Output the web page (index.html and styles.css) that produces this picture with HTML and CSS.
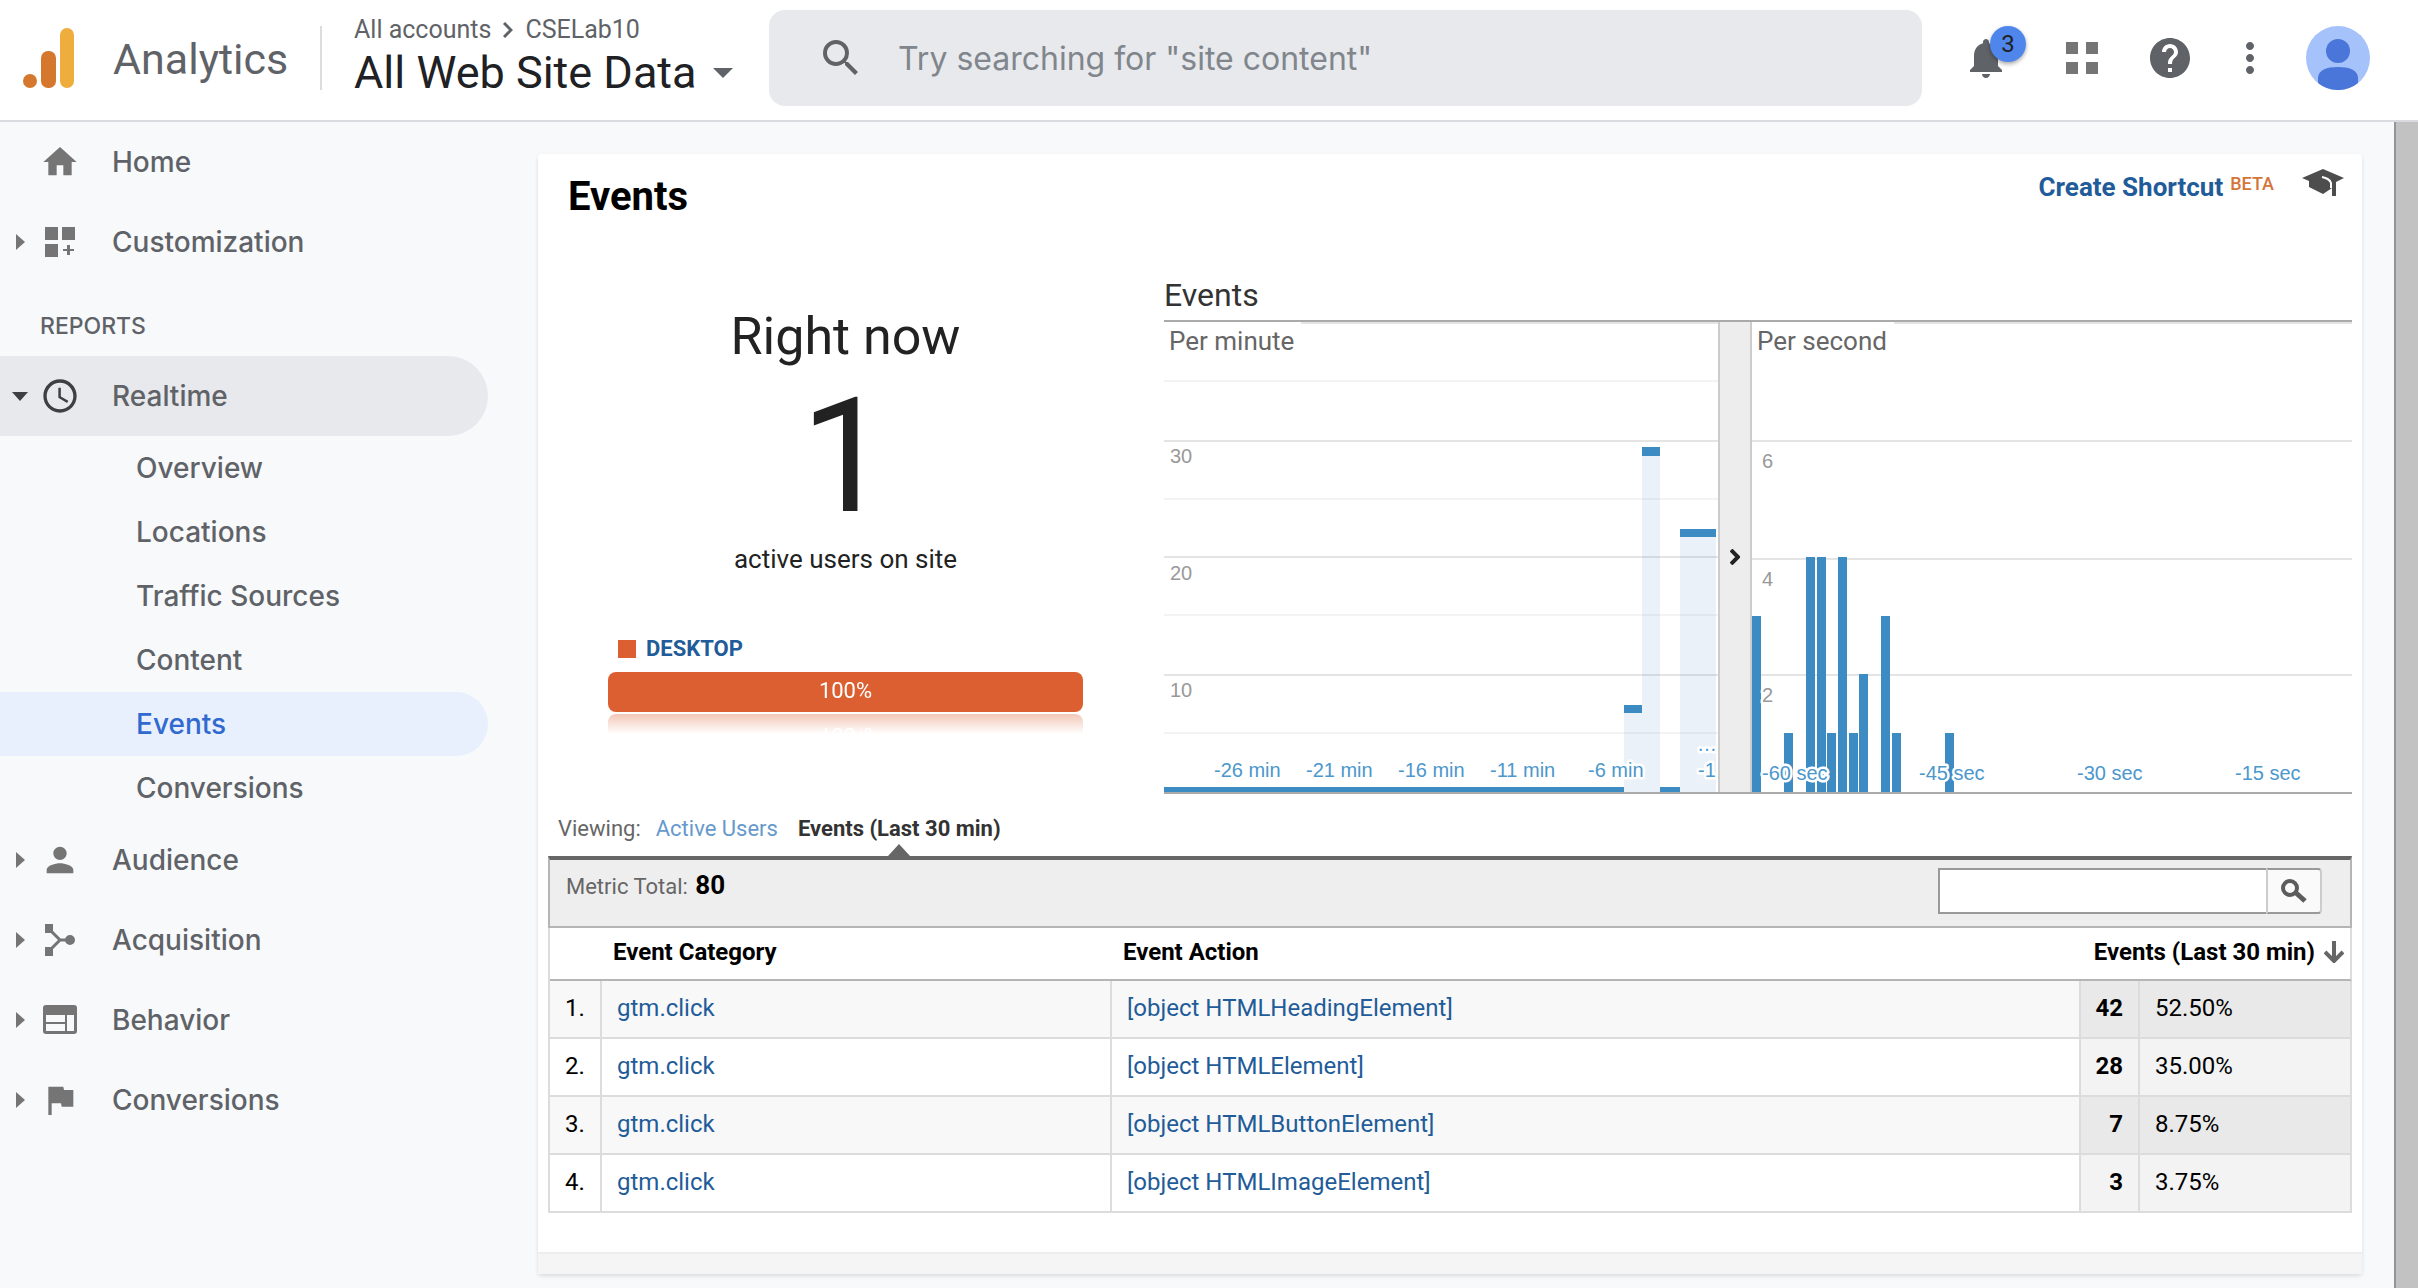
FILE: index.html
```html
<!DOCTYPE html>
<html lang="en">
<head>
<meta charset="utf-8">
<title>Analytics</title>
<link rel="stylesheet" href="styles.css">
</head>
<body>
<header class="topbar">
  <a class="brand" href="#">
    <svg class="brand-logo" viewBox="0 0 52 60" aria-hidden="true">
      <rect x="37" y="0" width="14" height="60" rx="7" fill="#efad3e"/>
      <rect x="18" y="23" width="15" height="37" rx="7" fill="#d5782d"/>
      <circle cx="7" cy="53" r="7" fill="#d5782d"/>
    </svg>
    <span class="brand-name">Analytics</span>
  </a>
  <div class="account">
    <div class="crumbs">
      <a href="#">All accounts</a>
      <svg class="crumb-arrow" viewBox="0 0 10 16" aria-hidden="true"><path d="M1 1l7 7-7 7" fill="none" stroke="#5f6368" stroke-width="3"/></svg>
      <a href="#">CSELab10</a>
    </div>
    <button class="view-picker" type="button">All Web Site Data<span class="caret"></span></button>
  </div>
  <form class="search">
    <svg class="search-icon" viewBox="3 3 18 18" aria-hidden="true"><path fill="#5f6368" d="M15.5 14h-.79l-.28-.27A6.471 6.471 0 0 0 16 9.5 6.5 6.5 0 1 0 9.5 16c1.61 0 3.09-.59 4.23-1.57l.27.28v.79l5 4.99L20.49 19l-4.99-5zm-6 0C7.01 14 5 11.99 5 9.5S7.01 5 9.5 5 14 7.01 14 9.5 11.99 14 9.5 14z"/></svg>
    <input class="search-input" type="text" aria-label="Search" placeholder="Try searching for &quot;site content&quot;">
  </form>
  <div class="tools">
    <button class="tool" type="button" aria-label="Notifications">
      <svg viewBox="0 0 24 24"><path d="M12 22c1.1 0 2-.9 2-2h-4c0 1.1.89 2 2 2zm6-6v-5c0-3.07-1.64-5.64-4.5-6.32V4c0-.83-.67-1.5-1.5-1.5s-1.5.67-1.5 1.5v.68C7.63 5.36 6 7.92 6 11v5l-2 2v1h16v-1l-2-2z"/></svg>
      <span class="badge">3</span>
    </button>
    <button class="tool apps" type="button" aria-label="Apps">
      <svg viewBox="0 0 48 48"><path fill="#757575" d="M8 8h12v12H8zM28 8h12v12H28zM8 28h12v12H8zM28 28h12v12H28z"/></svg>
    </button>
    <button class="tool help" type="button" aria-label="Help">
      <svg viewBox="0 0 24 24"><path d="M12 2C6.48 2 2 6.48 2 12s4.48 10 10 10 10-4.48 10-10S17.52 2 12 2zm1 17h-2v-2h2v2zm2.07-7.75l-.9.92C13.45 12.9 13 13.5 13 15h-2v-.5c0-1.1.45-2.1 1.17-2.83l1.24-1.26c.37-.36.59-.86.59-1.41 0-1.1-.9-2-2-2s-2 .9-2 2H8c0-2.21 1.79-4 4-4s4 1.79 4 4c0 .88-.36 1.68-.93 2.25z"/></svg>
    </button>
    <button class="tool more" type="button" aria-label="More">
      <svg viewBox="0 0 24 24"><path d="M12 8c1.1 0 2-.9 2-2s-.9-2-2-2-2 .9-2 2 .9 2 2 2zm0 2c-1.1 0-2 .9-2 2s.9 2 2 2 2-.9 2-2-.9-2-2-2zm0 6c-1.1 0-2 .9-2 2s.9 2 2 2 2-.9 2-2-.9-2-2-2z"/></svg>
    </button>
    <button class="avatar" type="button" aria-label="Account">
      <svg viewBox="0 0 64 64"><circle cx="32" cy="32" r="32" fill="#a5c2fa"/><circle cx="32" cy="25" r="12" fill="#4a75d9"/><path fill="#4a75d9" d="M12 57V52C12 44 21 41 32 41s20 3 20 11v5a32 32 0 0 1-40 0z"/></svg>
    </button>
  </div>
</header>
<div class="page">
  <nav class="sidebar" aria-label="Reports">
    <a class="item" href="#"><span class="twist"></span><svg class="item-icon" viewBox="0 0 24 24"><path d="M10 20v-6h4v6h5v-8h3L12 3 2 12h3v8z"/></svg>Home</a>
    <a class="item" href="#"><span class="twist closed"></span><svg class="item-icon" viewBox="-2 -2 40 40"><path d="M3 3h13v13H3zM20 3h13v13H20zM3 20h13v13H3zM25 21h3v4h4v2h-4v4h-3v-4h-4v-2h4z"/></svg>Customization</a>
    <h2 class="group">REPORTS</h2>
    <a class="item open" href="#"><span class="twist opened"></span><svg class="item-icon dark" viewBox="0 0 24 24"><path d="M11.99 2C6.47 2 2 6.48 2 12s4.47 10 9.99 10C17.52 22 22 17.52 22 12S17.52 2 11.99 2zM12 20c-4.42 0-8-3.58-8-8s3.58-8 8-8 8 3.58 8 8-3.58 8-8 8zm.5-13H11v6l5.25 3.15.75-1.23-4.500-2.670z"/></svg>Realtime</a>
    <a class="sub" href="#">Overview</a>
    <a class="sub" href="#">Locations</a>
    <a class="sub" href="#">Traffic Sources</a>
    <a class="sub" href="#">Content</a>
    <a class="sub current" href="#" aria-current="page">Events</a>
    <a class="sub" href="#">Conversions</a>
    <a class="item" href="#"><span class="twist closed"></span><svg class="item-icon" viewBox="0 0 24 24"><path d="M12 12c2.210 0 4-1.790 4-4s-1.790-4-4-4-4 1.790-4 4 1.790 4 4 4zm0 2c-2.670 0-8 1.340-8 4v2h16v-2c0-2.660-5.330-4-8-4z"/></svg>Audience</a>
    <a class="item" href="#"><span class="twist closed"></span><svg class="item-icon" viewBox="-2 -2 40 40"><path d="M3 2h8v9H3zM3 25h8v9H3zM28 13a5 5 0 1 1 0 10a5 5 0 0 1 0-10z"/><path d="M9 9l9 9-9 9M17 18h10" fill="none" stroke="#757575" stroke-width="3"/></svg>Acquisition</a>
    <a class="item" href="#"><span class="twist closed"></span><svg class="item-icon" viewBox="-2 -2 40 40"><path fill-rule="evenodd" d="M4 3h28a3 3 0 0 1 3 3v23a3 3 0 0 1-3 3H4a3 3 0 0 1-3-3V6a3 3 0 0 1 3-3zM4 13v7h19v-7zM4 22v7h19v-7zM25 13v16h7V13z"/></svg>Behavior</a>
    <a class="item" href="#"><span class="twist closed"></span><svg class="item-icon" viewBox="0 0 24 24"><path d="M14.400 6L14 4H5v17h2v-7h5.600l.4 2h7V6z"/></svg>Conversions</a>
  </nav>
  <main class="content">
    <section class="card">
      <div class="card-head">
        <h1 class="title">Events</h1>
        <div class="actions">
          <a class="shortcut" href="#">Create Shortcut</a><sup class="beta">BETA</sup>
          <svg class="hat" viewBox="0 0 42 28" aria-label="Education"><path fill="#4d4d4d" d="M0 9L21 0l21 9-8 4v14h-4v-8l-9 6-14-7v-6z"/><path d="M20 8c4 1 8 2 9 6v5" fill="none" stroke="#fff" stroke-width="2"/></svg>
        </div>
      </div>
      <div class="overview">
        <div class="now">
          <h2 class="now-title">Right now</h2>
          <div class="now-count">1</div>
          <div class="now-label">active users on site</div>
          <div class="legend"><span class="swatch"></span><a href="#">DESKTOP</a></div>
          <div class="device-bar">100%</div>
        </div>
        <div class="charts">
          <h2 class="charts-title">Events</h2>
          <div class="plots">
            <figure class="plot plot-minute">
              <svg viewBox="0 0 554 470" role="img" aria-label="Events per minute">
                <path class="grid" d="M137 1H554M0 119H554M0 235H554M0 353H554"/>
                <path class="grid minor" d="M0 59H554M0 177H554M0 293H554M0 411H554"/>
                <path class="area" d="M460 383h18v87h-18zM478 126h18v344h-18zM516 207h36v263h-36z"/>
                <path class="bar" d="M0 465h460v5H0zM496 465h20v5h-20zM460 383h18v8h-18zM478 125h18v9h-18zM516 207h36v8h-36z"/>
                <g class="ylab"><text x="6" y="141">30</text><text x="6" y="258">20</text><text x="6" y="375">10</text></g>
                <g class="xlab"><text x="50" y="455">-26 min</text><text x="142" y="455">-21 min</text><text x="234" y="455">-16 min</text><text x="326" y="455">-11 min</text><text x="424" y="455">-6 min</text><text x="534" y="455">-1</text><text x="533" y="429">…</text></g>
                <text class="name" x="5" y="28">Per minute</text>
              </svg>
            </figure>
            <button class="collapse" type="button" aria-label="Collapse per minute chart">
              <svg viewBox="0 0 10 16"><path d="M1 1l7 7-7 7" fill="none" stroke="#222" stroke-width="4"/></svg>
            </button>
            <figure class="plot plot-second">
              <svg viewBox="0 0 600 470" role="img" aria-label="Events per second">
                <path class="grid" d="M142 1H600M0 119H600M0 237H600M0 353H600"/>
                <path class="bar" d="M0 294h9v176H0zM32 411h9v59h-9zM54 235h9v235h-9zM65 235h9v235h-9zM75 411h9v59h-9zM86 235h9v235h-9zM97 411h9v59h-9zM107 352h9v118h-9zM129 294h9v176h-9zM140 411h9v59h-9zM193 411h9v59h-9z"/>
                <g class="ylab"><text x="10" y="146">6</text><text x="10" y="264">4</text><text x="10" y="380">2</text></g>
                <g class="xlab"><text x="10" y="458">-60 sec</text><text x="167" y="458">-45 sec</text><text x="325" y="458">-30 sec</text><text x="483" y="458">-15 sec</text></g>
                <text class="name" x="5" y="28">Per second</text>
              </svg>
            </figure>
          </div>
        </div>
      </div>
      <div class="tabs">
        <span>Viewing:</span>
        <a class="tab" href="#">Active Users</a>
        <a class="tab selected" href="#">Events (Last 30 min)</a>
      </div>
      <div class="summary">
        <div class="total">Metric Total: <strong>80</strong></div>
        <form class="filter">
          <input class="filter-input" type="text" aria-label="Filter events">
          <button class="filter-go" type="button" aria-label="Filter">
            <svg viewBox="0 0 26 24"><circle cx="9" cy="9" r="7" fill="none" stroke="#5c5c5c" stroke-width="4"/><path d="M14 13l10 9" stroke="#5c5c5c" stroke-width="5"/></svg>
          </button>
        </form>
      </div>
      <table class="events">
        <colgroup><col class="c-index"><col class="c-category"><col><col class="c-count"><col class="c-share"></colgroup>
        <thead>
          <tr><th></th><th scope="col">Event Category</th><th scope="col">Event Action</th><th class="sorted" scope="col" colspan="2"><span class="sort">Events (Last 30 min)<svg viewBox="0 0 20 22"><path d="M10 0v19M1 11l9 9 9-9" fill="none" stroke="#666" stroke-width="4"/></svg></span></th></tr>
        </thead>
        <tbody>
          <tr><td>1.</td><td><a href="#">gtm.click</a></td><td><a href="#">[object HTMLHeadingElement]</a></td><td>42</td><td>52.50%</td></tr>
          <tr><td>2.</td><td><a href="#">gtm.click</a></td><td><a href="#">[object HTMLElement]</a></td><td>28</td><td>35.00%</td></tr>
          <tr><td>3.</td><td><a href="#">gtm.click</a></td><td><a href="#">[object HTMLButtonElement]</a></td><td>7</td><td>8.75%</td></tr>
          <tr><td>4.</td><td><a href="#">gtm.click</a></td><td><a href="#">[object HTMLImageElement]</a></td><td>3</td><td>3.75%</td></tr>
        </tbody>
      </table>
      <div class="card-foot"></div>
    </section>
  </main>
  <div class="scroll-track" aria-hidden="true"></div>
</div>
</body>
</html>
```
FILE: styles.css
```css
* { box-sizing: border-box; }
body { margin: 0; background: #f8f9fb; color: #000; font-family: Roboto, "Liberation Sans", sans-serif; font-size: 24px; }
a { color: inherit; text-decoration: none; }
button { border: 0; padding: 0; background: none; font: inherit; color: inherit; cursor: pointer; }
h1, h2, figure { margin: 0; font-weight: 400; }
svg { display: block; }

/* Top bar */
.topbar { display: flex; align-items: center; height: 122px; padding: 0 48px 4px 23px; background: #fff; border-bottom: 2px solid #dadbe0; }
.brand { display: flex; align-items: center; gap: 38px; width: 299px; height: 64px; border-right: 2px solid #dadce0; color: #5f6368; }
.brand-logo { width: 52px; height: 60px; }
.brand-name { font-size: 43px; line-height: 52px; padding-top: 2px; }
.account { width: 415px; margin-left: 32px; padding-top: 2px; }
.crumbs { display: flex; align-items: center; gap: 12px; color: #5f6368; font-size: 25px; line-height: 28px; }
.crumb-arrow { width: 10px; height: 16px; }
.view-picker { display: flex; align-items: center; gap: 16px; color: #202124; font-size: 45px; line-height: 58px; white-space: nowrap; }
.caret { border: 10px solid transparent; border-top-color: #5f6368; border-bottom: 0; }
.search { display: flex; align-items: center; flex: 1; height: 96px; padding-left: 54px; gap: 39px; border-radius: 16px; background: #e8e9ed; }
.search-icon { width: 36px; height: 36px; }
.search-input { flex: 1; min-width: 0; border: 0; padding: 0; background: none; outline: 0; font: 32px Inter, Roboto, sans-serif; color: #5f6368; }
.search-input::placeholder { color: #80868b; opacity: 1; }
.tools { display: flex; align-items: center; margin-left: 40px; }
.tool { position: relative; width: 48px; height: 48px; margin-right: 48px; }
.apps { margin-right: 40px; }
.help, .more { margin-right: 32px; }
.tool svg { width: 48px; height: 48px; fill: #5f6368; }
.badge { position: absolute; left: 28px; top: -8px; width: 36px; height: 36px; border-radius: 18px; background: #4f86ec; color: #202124; font-size: 24px; line-height: 36px; text-align: center; box-shadow: 0 2px 4px rgba(0, 0, 0, .35); }
.avatar { width: 64px; height: 64px; }

/* Page frame */
.page { display: flex; align-items: stretch; min-height: calc(100vh - 122px); }
.content { flex: 1; min-width: 0; padding: 32px 32px 14px 0; }
.scroll-track { width: 24px; border-left: 2px solid #949598; background: #c2c2c2; }

/* Side navigation */
.sidebar { width: 538px; flex: none; padding-right: 50px; font-family: Inter, Roboto, sans-serif; font-size: 28px; font-weight: 500; color: #5f6368; }
.item { display: flex; align-items: center; height: 80px; }
.item-icon { width: 40px; height: 40px; margin-right: 32px; fill: #757575; }
.item-icon.dark { fill: #3c4043; }
.twist { width: 40px; display: flex; padding-left: 16px; }
.closed::before { content: ""; border: 8px solid transparent; border-left: 9px solid #757575; border-right: 0; }
.opened { padding-left: 12px; }
.opened::before { content: ""; border: 8px solid transparent; border-top: 9px solid #3c4043; border-bottom: 0; }
.open { background: #e8e9ed; border-radius: 0 40px 40px 0; }
.group { height: 74px; padding: 7px 0 0 40px; font-size: 23px; line-height: 74px; font-weight: 500; }
.sub { display: flex; align-items: center; height: 64px; padding-left: 136px; }
.current { background: #e8effd; color: #3069d0; border-radius: 0 32px 32px 0; }

/* Report card */
.card { padding: 0 10px; border-radius: 4px; background: #fff; box-shadow: 0 2px 4px rgba(0, 0, 0, .12); }
.card-head { display: flex; justify-content: space-between; height: 84px; padding: 18px 8px 0 20px; }
.title { padding-top: 1px; font-size: 40px; line-height: 48px; font-weight: 700; }
.actions { display: flex; align-items: flex-start; }
.shortcut { color: #1f5c99; font-size: 26px; line-height: 30px; font-weight: 700; }
.beta { margin-left: 7px; color: #d4753a; font-size: 18px; line-height: 24px; font-weight: 500; }
.hat { width: 42px; height: 28px; margin-left: 28px; margin-top: -3px; }
.overview { display: grid; grid-template-columns: 1fr 2fr; column-gap: 22px; }

.now { padding: 69px 59px 0 60px; color: #222; text-align: center; }
.now-title { font-size: 52px; line-height: 60px; }
.now-count { margin-top: 10px; font-size: 160px; line-height: 160px; }
.now-label { margin-top: 6px; font-size: 26px; line-height: 32px; }
.legend { display: flex; align-items: center; gap: 10px; margin-top: 61px; padding-left: 10px; font-size: 22px; line-height: 26px; font-weight: 700; color: #1f5c99; }
.swatch { width: 18px; height: 18px; background: #dc5f31; }
.device-bar { height: 40px; margin-top: 10px; border-radius: 8px; background: #dc5f31; color: #fff; font-size: 22px; line-height: 38px; -webkit-box-reflect: below 2px linear-gradient(transparent 50%, rgba(0, 0, 0, .35)); }

.charts { padding-top: 37px; }
.charts-title { padding-bottom: 5px; border-bottom: 2px solid #aaa; color: #333; font-size: 32px; line-height: 40px; }
.plots { display: grid; grid-template-columns: 554fr 34px 600fr; border-bottom: 2px solid #aaa; }
.plot svg { width: 100%; height: auto; }
.grid { stroke: #e4e4e4; stroke-width: 2; fill: none; }
.minor { stroke: #f3f3f3; }
.area { fill: rgba(60, 130, 200, .11); }
.bar { fill: #3c8bc3; }
.ylab, .xlab { font-family: "Liberation Sans", sans-serif; font-size: 20px; stroke: #fff; stroke-width: 5px; stroke-linejoin: round; paint-order: stroke; }
.ylab { fill: #999; }
.xlab { fill: #4c97cb; }
.name { fill: #666; font-size: 26px; }
.collapse { display: flex; align-items: center; justify-content: center; border: solid #ccc; border-width: 0 2px; background: #ededed; }
.collapse svg { width: 10px; height: 16px; }

/* Tabs and table */
.tabs { display: flex; height: 62px; padding: 22px 10px 0; color: #666; font-size: 22px; line-height: 26px; }
.tab { position: relative; margin-left: 15px; color: #6699cc; }
.selected { margin-left: 20px; color: #333; font-weight: 700; }
.selected::after { content: ""; position: absolute; left: 50%; bottom: 0; margin-left: -11px; border: 11px solid transparent; border-top: 0; border-bottom: 12px solid #666; }
.summary { display: flex; justify-content: space-between; height: 72px; padding: 8px 28px 0 16px; background: #eee; border: 2px solid #b5b5b5; border-top: 4px solid #666; }
.total { padding-top: 2px; color: #666; font-size: 22px; line-height: 30px; }
.total strong { margin-left: 2px; color: #000; font-size: 26px; }
.filter { display: flex; height: 46px; }
.filter-input { width: 328px; border: 2px solid #999; border-right: 0; background: #fff; outline: 0; }
.filter-go { display: flex; align-items: center; justify-content: center; width: 56px; border: 2px solid #999; border-left-color: #ccc; border-right-color: #ccc; border-radius: 0 4px 4px 0; background: #fafafa; }
.filter-go svg { width: 26px; height: 24px; }
.events { width: 100%; table-layout: fixed; border-collapse: separate; border-spacing: 0; border-left: 2px solid #dcdcdc; font-size: 24px; line-height: 28px; }
.c-index { width: 52px; }
.c-category { width: 510px; }
.c-count { width: 59px; }
.c-share { width: 212px; }
.events th { padding: 10px 0 13px 11px; border-bottom: 2px solid #b5b5b5; text-align: left; font-weight: 700; }
.events .sorted { border-right: 2px solid #dcdcdc; padding-right: 6px; }
.sort { display: flex; align-items: center; justify-content: flex-end; gap: 9px; white-space: nowrap; }
.sort svg { width: 20px; height: 22px; }
.events td { padding: 13px 0 15px 15px; border: solid #dcdcdc; border-width: 0 2px 2px 0; }
.events td a { color: #1f5c99; }
.events td:nth-child(4) { padding: 13px 15px 15px 0; text-align: right; font-weight: 700; background: #f3f3f3; }
.events td:nth-child(5) { padding-left: 15px; background: #f3f3f3; }
.events tbody tr:nth-child(odd) td { background: #f8f8f8; }
.events tbody tr:nth-child(odd) td:nth-child(n+4) { background: #e9e9e9; }
.card-foot { height: 22px; margin: 39px -10px 0; border-top: 2px solid #eee; background: #f5f5f5; }
```
